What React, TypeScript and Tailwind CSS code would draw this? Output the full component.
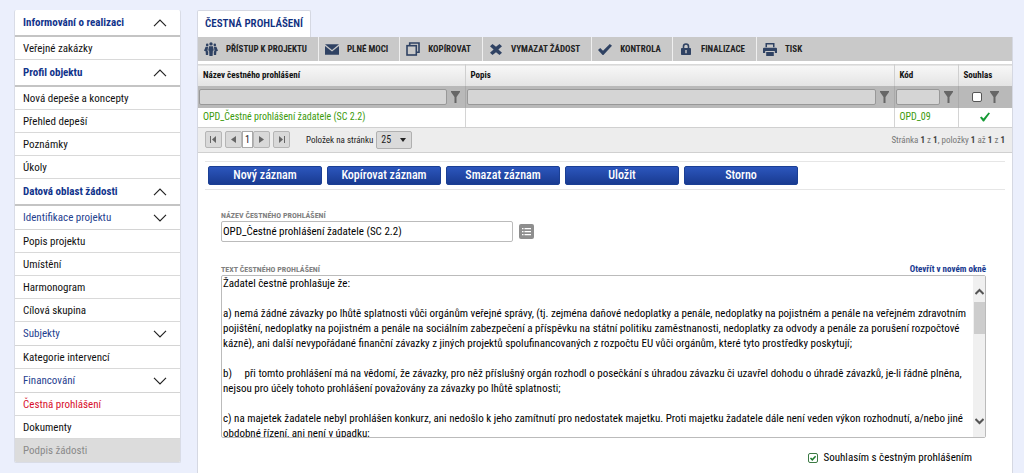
import React from "react";

type MenuItem = {
  label: string;
  kind: "section" | "group" | "item" | "active" | "disabled";
  open?: boolean;
};

const menu: MenuItem[] = [
  { label: "Informování o realizaci", kind: "section", open: true },
  { label: "Veřejné zakázky", kind: "item" },
  { label: "Profil objektu", kind: "section", open: true },
  { label: "Nová depeše a koncepty", kind: "item" },
  { label: "Přehled depeší", kind: "item" },
  { label: "Poznámky", kind: "item" },
  { label: "Úkoly", kind: "item" },
  { label: "Datová oblast žádosti", kind: "section", open: true },
  { label: "Identifikace projektu", kind: "group" },
  { label: "Popis projektu", kind: "item" },
  { label: "Umístění", kind: "item" },
  { label: "Harmonogram", kind: "item" },
  { label: "Cílová skupina", kind: "item" },
  { label: "Subjekty", kind: "group" },
  { label: "Kategorie intervencí", kind: "item" },
  { label: "Financování", kind: "group" },
  { label: "Čestná prohlášení", kind: "active" },
  { label: "Dokumenty", kind: "item" },
  { label: "Podpis žádosti", kind: "disabled" },
];

const menuStyles = {
  section: "h-[27px] border-b-2 border-[#c4c4c4] font-bold text-[#12348c]",
  group: "h-6 border-b border-[#d4d4d4] text-[#1f418f]",
  item: "h-[23px] border-b border-[#d9d9d9] pt-px text-[#111]",
  active: "h-[23px] border-b border-[#d9d9d9] pt-px text-[#d8102c]",
  disabled: "h-[23px] bg-[#dcdcdc] text-[#8a8a8a]",
};

const declaration = `Žadatel čestně prohlašuje že:

a) nemá žádné závazky po lhůtě splatnosti vůči orgánům veřejné správy, (tj. zejména daňové nedoplatky a penále, nedoplatky na pojistném a penále na veřejném zdravotním pojištění, nedoplatky na pojistném a penále na sociálním zabezpečení a příspěvku na státní politiku zaměstnanosti, nedoplatky za odvody a penále za porušení rozpočtové kázně), ani další nevypořádané finanční závazky z jiných projektů spolufinancovaných z rozpočtu EU vůči orgánům, které tyto prostředky poskytují;

b)     při tomto prohlášení má na vědomí, že závazky, pro něž příslušný orgán rozhodl o posečkání s úhradou závazku či uzavřel dohodu o úhradě závazků, je-li řádně plněna, nejsou pro účely tohoto prohlášení považovány za závazky po lhůtě splatnosti;

c) na majetek žadatele nebyl prohlášen konkurz, ani nedošlo k jeho zamítnutí pro nedostatek majetku. Proti majetku žadatele dále není veden výkon rozhodnutí, a/nebo jiné obdobné řízení, ani není v úpadku;`;

function Chevron({ up }: { up?: boolean }) {
  return (
    <svg width="14" height="8" viewBox="0 0 14 8" fill="none" stroke="#222" strokeWidth="1.2" aria-hidden>
      <path d={up ? "M1 7.2 7 1.2 13 7.2" : "M1 0.8 7 6.8 13 0.8"} />
    </svg>
  );
}

function PeopleIcon() {
  return (
    <svg width="14" height="14" viewBox="0 0 14 14" fill="currentColor" aria-hidden>
      <circle cx="7" cy="1.9" r="1.7" />
      <circle cx="3.2" cy="2.9" r="1.3" />
      <circle cx="10.8" cy="2.9" r="1.3" />
      <path d="M5 4.2h4l.8 4.3-.9.3L8.6 14H5.4L5.1 8.8l-.9-.3z" />
      <path d="M1.6 4.8h2.5L3.5 9l.8.5-.2 3.5H1.9L1.6 9.2 0 8.7z" />
      <path d="M12.4 4.8H9.9l.6 4.2-.8.5.2 3.5h2.2l.3-3.8 1.6-.5z" />
    </svg>
  );
}

function MailIcon() {
  return (
    <svg width="15" height="11" viewBox="0 0 15 11" fill="currentColor" aria-hidden>
      <path d="M0 0h15L7.5 6z" />
      <path d="M0 1.8 7.5 7.6 15 1.8V11H0z" />
    </svg>
  );
}

function CopyIcon() {
  return (
    <svg width="14" height="14" viewBox="0 0 14 14" fill="none" stroke="currentColor" strokeWidth="1.6" aria-hidden>
      <rect x="1" y="3.7" width="9.3" height="9.3" />
      <path d="M3.7 3.5V1H13v9.3h-2.5" />
    </svg>
  );
}

function CrossIcon() {
  return (
    <svg width="12" height="11" viewBox="0 0 12 11" fill="currentColor" aria-hidden>
      <path d="M2.5 0 6 2.8 9.5 0 12 2.3 8.4 5.5 12 8.7 9.5 11 6 8.2 2.5 11 0 8.7 3.6 5.5 0 2.3z" />
    </svg>
  );
}

function TickIcon() {
  return (
    <svg width="14" height="11" viewBox="0 0 14 11" fill="currentColor" aria-hidden>
      <path d="M0 6 2.2 4 5 6.700 11.8 0 14 1.8 5.4 11H4.6z" />
    </svg>
  );
}

function LockIcon() {
  return (
    <svg width="10" height="12" viewBox="0 0 10 12" aria-hidden>
      <path d="M2.5 6V3.5a2.5 2.5 0 0 1 5 0V6" fill="none" stroke="currentColor" strokeWidth="1.6" />
      <rect y="5" width="10" height="7" rx=".8" fill="currentColor" />
      <path d="M4.3 7h1.4v3.200H4.3z" fill="#c9c9c9" />
    </svg>
  );
}

function PrintIcon() {
  return (
    <svg width="14" height="13" viewBox="0 0 14 13" fill="currentColor" aria-hidden>
      <path d="M2.5 0h9v4.2H10V1.4H4v2.8H2.5z" />
      <path d="M1 4.8h12a1 1 0 0 1 1 1V10h-2.200V8H2.2v2H0V5.8a1 1 0 0 1 1-1z" />
      <path d="M3.2 9h7.6v4H3.2z" />
    </svg>
  );
}

function Funnel() {
  return (
    <button type="button" aria-label="Filtr" className="shrink-0">
      <svg width="9" height="12" viewBox="0 0 9 12" fill="#666" aria-hidden>
        <path d="M0 0h9v1L5.5 6v6h-2V6L0 1z" />
      </svg>
    </button>
  );
}

const tools = [
  { label: "PŘÍSTUP K PROJEKTU", icon: <PeopleIcon /> },
  { label: "PLNÉ MOCI", icon: <MailIcon /> },
  { label: "KOPÍROVAT", icon: <CopyIcon /> },
  { label: "VYMAZAT ŽÁDOST", icon: <CrossIcon /> },
  { label: "KONTROLA", icon: <TickIcon /> },
  { label: "FINALIZACE", icon: <LockIcon /> },
  { label: "TISK", icon: <PrintIcon /> },
];

function PagerButton({ label, d }: { label: string; d: string }) {
  return (
    <button
      type="button"
      aria-label={label}
      className="flex h-[17px] w-[17px] items-center justify-center rounded-xs border border-[#b5b5b5] bg-[#d9d9d9]"
    >
      <svg width="7" height="7" viewBox="0 0 7 7" fill="#666" aria-hidden>
        <path d={d} />
      </svg>
    </button>
  );
}

function Sidebar() {
  return (
    <nav className="w-[167px] shrink-0 self-start overflow-hidden rounded-xs border border-t-0 border-[#d9dce6] bg-white">
      {menu.map(({ label, kind, open }) => (
        <a
          key={label}
          href="#"
          className={`flex items-center justify-between pr-[13px] pl-2 ${menuStyles[kind]}`}
        >
          {label}
          {(kind === "section" || kind === "group") && <Chevron up={open} />}
        </a>
      ))}
    </nav>
  );
}

function RecordsTable() {
  const filter = "h-4 w-full min-w-0 rounded-xs border border-[#989898] bg-[#d5d5d5] px-1";
  return (
    <table className="w-full table-fixed border-collapse">
      <colgroup>
        <col className="w-[267px]" />
        <col />
        <col className="w-16" />
        <col className="w-[54px]" />
      </colgroup>
      <thead>
        <tr className="h-[21px] border-t border-[#d8d8d8] bg-linear-to-b from-[#f7f7f7] to-[#e4e4e4] text-left text-[9px] text-[#111]">
          <th className="border-r border-[#cfcfcf] pl-[5px]">Název čestného prohlášení</th>
          <th className="border-r border-[#cfcfcf] pl-[5px]">Popis</th>
          <th className="border-r border-[#cfcfcf] pl-[5px]">Kód</th>
          <th className="pl-[5px]">Souhlas</th>
        </tr>
        <tr className="h-[22px] bg-[#b9b9b9]">
          {["Filtr názvu", "Filtr popisu", "Filtr kódu"].map((name) => (
            <td key={name} className="border-r border-[#aaa] pr-[5px] pl-px">
              <div className="flex items-center gap-1">
                <input aria-label={name} className={filter} />
                <Funnel />
              </div>
            </td>
          ))}
          <td>
            <div className="flex items-center justify-center gap-2">
              <input
                type="checkbox"
                aria-label="Filtr souhlasu"
                className="h-[10px] w-[10px] appearance-none rounded-xs border border-[#555] bg-white"
              />
              <Funnel />
            </div>
          </td>
        </tr>
      </thead>
      <tbody>
        <tr className="h-[19px] text-[10px] leading-4 text-[#3c9a0c]">
          <td className="border-r border-[#d4d4d4] pl-[5px]">OPD_Čestné prohlášení žadatele (SC 2.2)</td>
          <td className="border-r border-[#d4d4d4]" />
          <td className="border-r border-[#d4d4d4] pl-[5px]">OPD_09</td>
          <td>
            <svg className="mx-auto" width="10" height="10" viewBox="0 0 10 10" fill="#159a35" aria-label="Ano">
              <path d="M0 5.5 1.5 4.5 3.5 6.5 8.5.5 10 1.2 4 9.5H3z" />
            </svg>
          </td>
        </tr>
      </tbody>
    </table>
  );
}

function Pager() {
  return (
    <div className="flex h-[26px] items-center border-y border-[#d0d0d0] bg-[#ededed] px-[7px] text-[9px] text-[#222]">
      <div className="flex items-center">
        <PagerButton label="První" d="M0 0h1v7H0zM6 0v7L2 3.5z" />
        <span className="ml-[3px] flex">
          <PagerButton label="Předchozí" d="M6 0v7L1 3.5z" />
          <span className="flex h-[17px] w-[11px] items-center justify-center border border-[#aaa] bg-white text-[10px]">
            1
          </span>
          <PagerButton label="Další" d="M1 0v7l5-3.5z" />
        </span>
        <span className="ml-[3px]">
          <PagerButton label="Poslední" d="M1 0v7l4-3.5zM6 0h1v7H6z" />
        </span>
      </div>
      <label htmlFor="pageSize" className="mr-[3px] ml-4">
        Položek na stránku
      </label>
      <div className="relative">
        <select
          id="pageSize"
          defaultValue="25"
          className="h-[18px] w-9 appearance-none rounded-xs border border-[#b0b0b0] bg-[#dadada] pl-1 text-[10px]"
        >
          <option>25</option>
          <option>50</option>
        </select>
        <span className="pointer-events-none absolute top-[7px] right-[6px] border-x-3 border-t-4 border-x-transparent border-t-[#222]" />
      </div>
      <p className="ml-auto text-[#777]">
        Stránka <b className="text-[#444]">1</b> z <b className="text-[#444]">1</b>, položky{" "}
        <b className="text-[#444]">1</b> až <b className="text-[#444]">1</b> z <b className="text-[#444]">1</b>
      </p>
    </div>
  );
}

function RecordForm() {
  return (
    <form className="pr-[26px] pl-[23px]">
      <label htmlFor="name" className="block text-[8px] leading-[10px] font-bold text-[#808080]">
        NÁZEV ČESTNÉHO PROHLÁŠENÍ
      </label>
      <div className="flex items-center gap-[6px]">
        <input
          id="name"
          defaultValue="OPD_Čestné prohlášení žadatele (SC 2.2)"
          className="h-[21px] w-[292px] rounded-xs border border-[#bbb] px-px text-black"
        />
        <button
          type="button"
          aria-label="Vybrat"
          className="flex h-[15px] w-[15px] items-center justify-center rounded-xs bg-[#8e8e8e]"
        >
          <svg width="9" height="9" viewBox="0 0 9 9" fill="#fff" aria-hidden>
            <path d="M0 1h1.5v1.3H0zM2.5 1H9v1.3H2.5zM0 4h1.5v1.3H0zM2.5 4H9v1.3H2.5zM0 7h1.5v1.3H0zM2.5 7H9v1.3H2.5z" />
          </svg>
        </button>
      </div>

      <div className="mt-[21px] flex items-end justify-between">
        <label htmlFor="text" className="text-[8px] leading-[10px] font-bold text-[#808080]">
          TEXT ČESTNÉHO PROHLÁŠENÍ
        </label>
        <a href="#" className="text-[9px] leading-3 font-bold text-[#17398f]">
          Otevřít v novém okně
        </a>
      </div>
      <div className="flex h-[163px] rounded-xs border border-[#bbb]">
        <textarea
          id="text"
          defaultValue={declaration}
          className="min-w-0 flex-1 resize-none overflow-hidden px-px leading-[15px] text-black"
        />
        {/* Scrollbar */}
        <div className="flex w-3 flex-col items-center bg-[#f0f0f0] pt-3 pb-3">
          <svg width="9" height="7" viewBox="0 0 9 7" fill="none" stroke="#555" strokeWidth="2" aria-hidden>
            <path d="M.5 6 4.5 2l4 4" />
          </svg>
          <div className="mt-[7px] h-8 w-[11px] bg-[#cdcdcd]" />
          <svg className="mt-auto" width="9" height="7" viewBox="0 0 9 7" fill="none" stroke="#555" strokeWidth="2" aria-hidden>
            <path d="M.5 1 4.5 5l4-4" />
          </svg>
        </div>
      </div>

      <label className="mt-3 mr-[14px] flex items-center justify-end gap-[6px] text-black">
        <span className="relative flex">
          <input
            type="checkbox"
            defaultChecked
            className="h-[10px] w-[10px] appearance-none rounded-xs border border-[#3c7a44] bg-white"
          />
          <svg className="pointer-events-none absolute inset-0" width="10" height="10" viewBox="0 0 10 10" fill="none" stroke="#1c7a2c" strokeWidth="1.5" aria-hidden>
            <path d="M2.5 5 4.3 6.8 7.6 3.2" />
          </svg>
        </span>
        Souhlasím s čestným prohlášením
      </label>
    </form>
  );
}

export default function App() {
  return (
    <div className="flex min-h-screen gap-4 bg-[#ebeffc] pt-[10px] pr-[11px] pl-[14px] font-['Roboto_Condensed',Roboto,sans-serif] text-[11px] leading-4">
      <Sidebar />

      <main className="flex min-w-0 flex-1 flex-col">
        <h1 className="flex h-[27px] items-center self-start rounded-t-xs border border-b-0 border-[#d5d8e2] bg-white px-[7px] text-[11px] font-semibold text-[#10307f]">
          ČESTNÁ PROHLÁŠENÍ
        </h1>

        <div className="flex-1 border-x border-[#d5d8e2] bg-white">
          <div className="mb-[3px] flex h-6 bg-[#c9c9c9]">
            {tools.map(({ label, icon }, i) => (
              <button
                key={label}
                type="button"
                className={`flex items-center gap-2 pr-[11px] pl-[6px] text-[9px] font-bold text-[#222] ${
                  i < tools.length - 1 ? "border-r border-[#efefef]" : ""
                }`}
              >
                <span className="flex w-[14px] justify-center text-[#2f4263]">{icon}</span>
                {label}
              </button>
            ))}
          </div>

          <RecordsTable />
          <Pager />

          {/* Record actions */}
          <div className="mx-[7px] mt-2 mb-[21px] flex gap-[5px] border-y border-[#e6e6e6] px-[3px] py-1">
            {["Nový záznam", "Kopírovat záznam", "Smazat záznam", "Uložit", "Storno"].map((label) => (
              <button
                key={label}
                type="button"
                className="h-[19px] w-[114px] rounded-xs border border-[#1b3f94] bg-linear-to-b from-[#2c56bd] to-[#193b91] text-[12px] leading-4 font-medium text-white"
              >
                {label}
              </button>
            ))}
          </div>

          <RecordForm />
        </div>
      </main>
    </div>
  );
}
